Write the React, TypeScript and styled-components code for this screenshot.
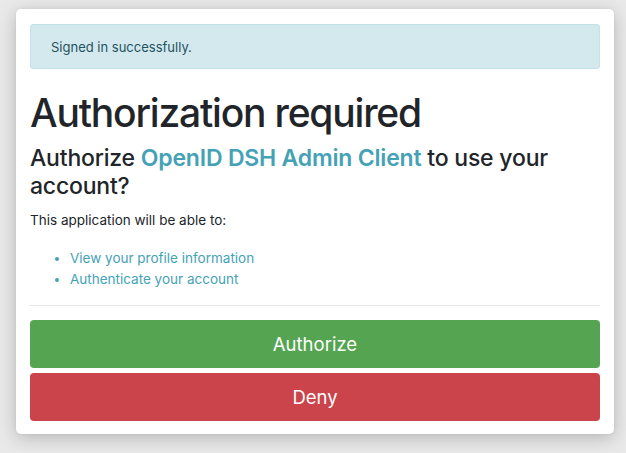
import React from "react";
import styled, { createGlobalStyle } from "styled-components";

const GlobalStyle = createGlobalStyle`
  html, body {
    margin: 0;
    padding: 0;
    background: #e9e9e9;
    font-family: Inter, "Liberation Sans", Arial, sans-serif;
    color: #212529;
  }
`;

const Page = styled.div`
  padding: 9px 12px 20px 16px;
`;

const Card = styled.div`
  background: #fff;
  border-radius: 5px;
  box-shadow: 0 4px 18px rgba(0, 0, 0, 0.22), 0 0 3px rgba(0, 0, 0, 0.06);
  padding: 15px 14px 13px 14px;
`;

const Alert = styled.div`
  height: 45px;
  box-sizing: border-box;
  display: flex;
  align-items: center;
  padding: 0 20px;
  background: #d4e9ee;
  border: 1px solid #c2e1e8;
  border-radius: 3px;
  color: #1f5360;
  font-size: 13px;
`;

const Title = styled.h1`
  margin: 20px 0 0;
  font-size: 39px;
  line-height: 48px;
  font-weight: 500;
  letter-spacing: -1.2px;
`;

const Subtitle = styled.h3`
  margin: 8px 0 0;
  font-size: 23px;
  line-height: 27.6px;
  font-weight: 500;
  letter-spacing: -0.2px;
`;

const ClientName = styled.span`
  color: #45a2b6;
  font-weight: 600;
`;

const Lead = styled.p`
  margin: 10px 0 0;
  font-size: 13.5px;
  line-height: 20px;
`;

const Scopes = styled.ul`
  margin: 18px 0 0;
  padding-left: 40px;
  font-size: 13.5px;
  line-height: 21px;
  color: #45a2b6;
`;

const Scope = styled.li``;

const Divider = styled.hr`
  margin: 15px 0 14px;
  border: 0;
  border-top: 1px solid #e6e6e6;
`;

const Actions = styled.div`
  display: flex;
  flex-direction: column;
  gap: 5px;
`;

const Button = styled.button<{ $variant: "success" | "danger" }>`
  height: 48px;
  border: 0;
  border-radius: 4px;
  background: ${(p) => (p.$variant === "success" ? "#55a451" : "#cb444b")};
  color: #fff;
  font-family: inherit;
  font-size: 18.5px;
  cursor: pointer;
`;

export default function App() {
  return (
    <>
      <GlobalStyle />
      <Page>
        <Card>
          <Alert>Signed in successfully.</Alert>
          <Title>Authorization required</Title>
          <Subtitle>
            Authorize <ClientName>OpenID DSH Admin Client</ClientName> to use
            your account?
          </Subtitle>
          <Lead>This application will be able to:</Lead>
          <Scopes>
            <Scope>View your profile information</Scope>
            <Scope>Authenticate your account</Scope>
          </Scopes>
          <Divider />
          <Actions>
            <Button $variant="success">Authorize</Button>
            <Button $variant="danger">Deny</Button>
          </Actions>
        </Card>
      </Page>
    </>
  );
}
